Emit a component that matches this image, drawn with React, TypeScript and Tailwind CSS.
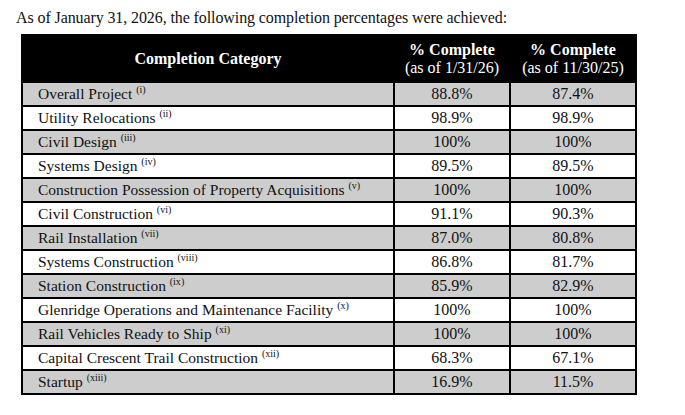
const rows: [string, string, string, string][] = [
  ['Overall Project', 'i', '88.8%', '87.4%'],
  ['Utility Relocations', 'ii', '98.9%', '98.9%'],
  ['Civil Design', 'iii', '100%', '100%'],
  ['Systems Design', 'iv', '89.5%', '89.5%'],
  ['Construction Possession of Property Acquisitions', 'v', '100%', '100%'],
  ['Civil Construction', 'vi', '91.1%', '90.3%'],
  ['Rail Installation', 'vii', '87.0%', '80.8%'],
  ['Systems Construction', 'viii', '86.8%', '81.7%'],
  ['Station Construction', 'ix', '85.9%', '82.9%'],
  ['Glenridge Operations and Maintenance Facility', 'x', '100%', '100%'],
  ['Rail Vehicles Ready to Ship', 'xi', '100%', '100%'],
  ['Capital Crescent Trail Construction', 'xii', '68.3%', '67.1%'],
  ['Startup', 'xiii', '16.9%', '11.5%'],
];

export default function App() {
  return (
    <div className="w-[685px] h-[415px] bg-white text-[#111] font-['Liberation_Serif',serif]">
      <p className="pl-[16px] pt-[8px] text-[16px] leading-[20px] tracking-[-0.1px]">
        As of January 31, 2026, the following completion percentages were achieved:
      </p>
      <table className="ml-[21px] mt-[6px] w-[614px] border-collapse border-2 border-black table-fixed">
        <colgroup>
          <col className="w-[372px]" />
          <col className="w-[116px]" />
          <col className="w-[126px]" />
        </colgroup>
        <thead>
          <tr className="h-[47px] bg-black text-white">
            <th className="border-2 border-black text-[16px] font-bold">Completion Category</th>
            <th className="border-2 border-black text-[16px] leading-[18px]">
              <div className="font-bold">% Complete</div>
              <div className="font-normal">(as of 1/31/26)</div>
            </th>
            <th className="border-2 border-black text-[16px] leading-[18px]">
              <div className="font-bold">% Complete</div>
              <div className="font-normal">(as of 11/30/25)</div>
            </th>
          </tr>
        </thead>
        <tbody>
          {rows.map(([label, note, a, b], i) => (
            <tr key={label} className={`h-[24px] ${i % 2 === 0 ? 'bg-[#cdcdcd]' : 'bg-white'}`}>
              <td className="border-2 border-black pl-[15px] text-[15.5px] leading-[18px] whitespace-nowrap">
                {label}{' '}
                <sup className="text-[10px] -top-[6px]">({note})</sup>
              </td>
              <td className="border-2 border-black text-center text-[16px] leading-[18px]">{a}</td>
              <td className="border-2 border-black text-center text-[16px] leading-[18px]">{b}</td>
            </tr>
          ))}
        </tbody>
      </table>
    </div>
  );
}
